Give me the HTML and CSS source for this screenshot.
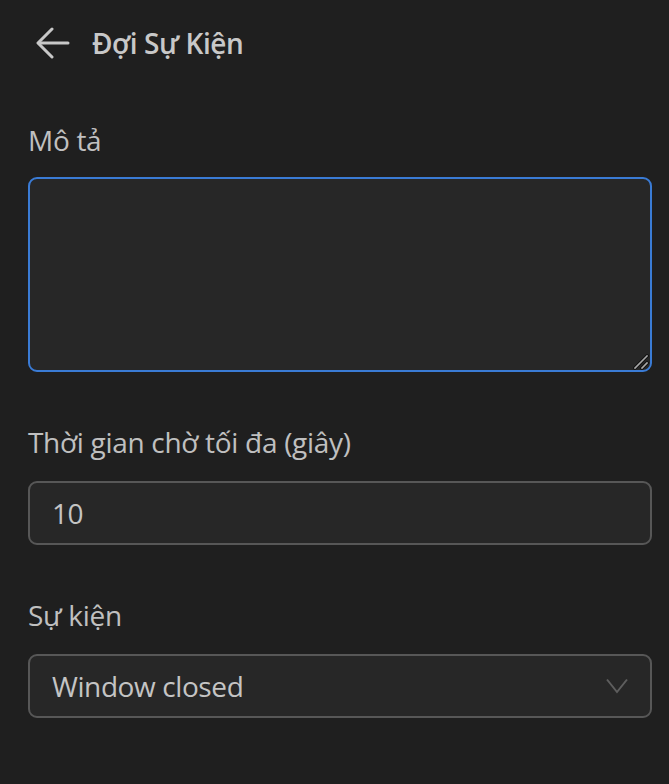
FILE: index.html
```html
<!DOCTYPE html>
<html lang="vi">
<head>
<meta charset="utf-8">
<link rel="stylesheet" href="styles.css">
</head>
<body>
<div class="page">
  <header class="header">
    <button class="back" aria-label="Back">
      <svg width="34" height="32" viewBox="0 0 34 32" fill="none" stroke="currentColor" stroke-width="3" stroke-linecap="round" stroke-linejoin="round">
        <path d="M32 16H3"/>
        <path d="M16 2L2 16L16 30"/>
      </svg>
    </button>
    <h1 class="title">Đợi Sự Kiện</h1>
  </header>

  <div class="field first">
    <label class="label">Mô tả</label>
    <div class="ta-wrap">
      <textarea class="textarea"></textarea>
      <svg class="grip" width="16" height="16" viewBox="0 0 16 16" fill="none" stroke-linecap="square">
        <path d="M2 14L14 2M9 14L14 9" stroke="#111" stroke-width="3.4"/>
        <path d="M2 14L14 2M9 14L14 9" stroke="#a8a8a8" stroke-width="1.6"/>
      </svg>
    </div>
  </div>

  <div class="field">
    <label class="label">Thời gian chờ tối đa (giây)</label>
    <div class="input">10</div>
  </div>

  <div class="field">
    <label class="label">Sự kiện</label>
    <div class="select">
      <span>Window closed</span>
      <svg class="chev" width="22" height="16" viewBox="0 0 22 16" fill="none" stroke="currentColor" stroke-width="2">
        <path d="M1 1.5L11 14L21 1.5"/>
      </svg>
    </div>
  </div>
</div>
</body>
</html>
```
FILE: styles.css
```css
html, body {
  margin: 0;
  background: #1f1f1f;
}
body {
  font-family: "Open Sans", "Noto Sans", sans-serif;
  color: #c2c2c2;
}
.page {
  padding: 23px 17px 0 28px;
  display: flex;
  flex-direction: column;
}
.header {
  display: flex;
  align-items: center;
  height: 40px;
  gap: 22px;
}
.back {
  background: none;
  border: 0;
  padding: 0;
  margin-left: 8px;
  color: #c8c8c8;
  display: flex;
}
.title {
  margin: 0;
  font-size: 28px;
  font-weight: 600;
  line-height: 40px;
  letter-spacing: -0.4px;
  color: #c8c8c8;
}
.field {
  display: flex;
  flex-direction: column;
}
.field.first { margin-top: 57px; }
.field + .field { margin-top: 50px; }
.label {
  font-size: 28px;
  line-height: 40px;
  letter-spacing: -0.3px;
  color: #c0c0c0;
  margin-bottom: 19px;
}
.first .label { margin-bottom: 17px; }
.ta-wrap {
  position: relative;
  display: flex;
}
.textarea {
  box-sizing: border-box;
  width: 100%;
  height: 195px;
  margin: 0;
  background: #272727;
  border: 2px solid #3a7bd5;
  border-radius: 9px;
  outline: none;
  color: #c8c8c8;
  font-family: inherit;
  font-size: 28px;
  resize: none;
}
.grip {
  position: absolute;
  right: 3px;
  bottom: 2px;
}
.input, .select {
  box-sizing: border-box;
  height: 64px;
  background: #272727;
  border: 2px solid #575757;
  border-radius: 9px;
  font-size: 28px;
  letter-spacing: -0.4px;
  color: #c4c4c4;
  padding: 0 22px;
  display: flex;
  align-items: center;
}
.select {
  justify-content: space-between;
}
.chev {
  color: #5e5e5e;
  margin-right: 0;
}
```
